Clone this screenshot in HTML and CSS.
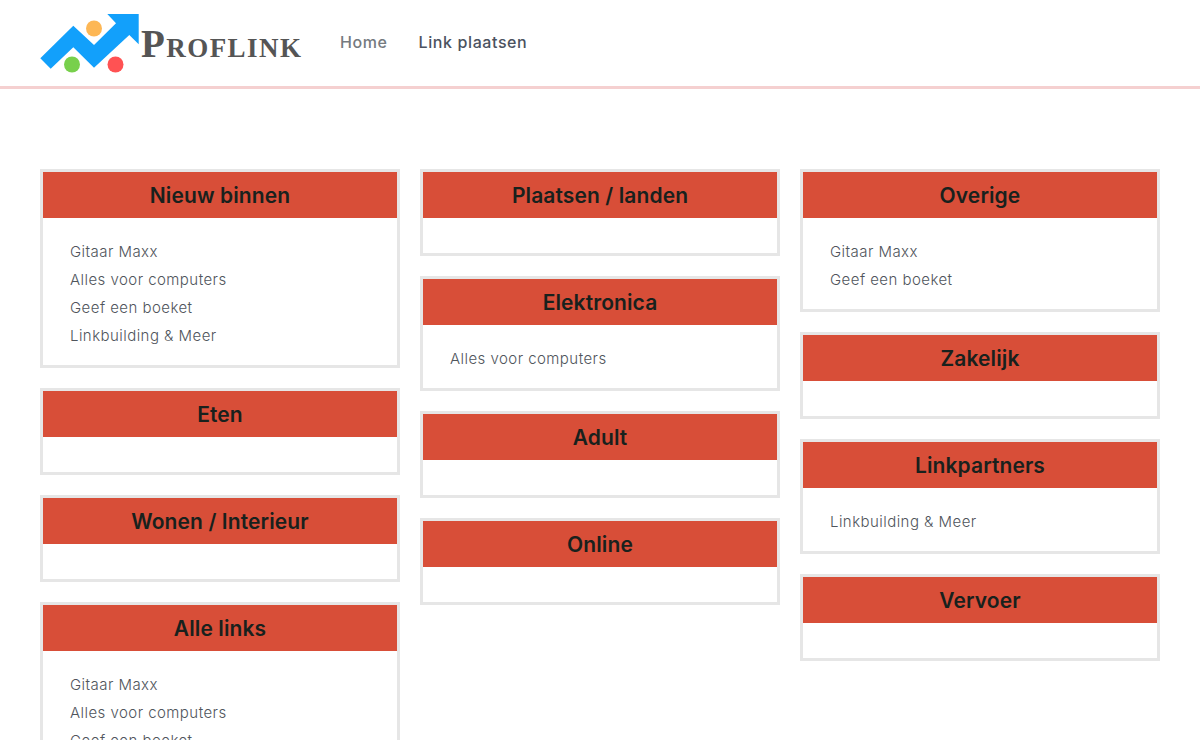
FILE: index.html
```html
<!DOCTYPE html>
<html lang="nl">
<head>
<meta charset="utf-8">
<title>Proflink</title>
<link rel="stylesheet" href="styles.css">
</head>
<body>
<header class="site-header">
  <a class="logo" href="#">
    <svg class="logo-mark" width="100" height="76" viewBox="0 0 100 76">
      <circle cx="54" cy="28.500" r="8" fill="#fdb755"/>
      <circle cx="32" cy="64.500" r="8" fill="#78d04c"/>
      <circle cx="75.500" cy="64.500" r="8" fill="#ff5253"/>
      <polygon fill="#12a0fb" points="0.300,58.300 33.300,25.700 54,45 76,23.300 67.300,14 98.700,14 98.700,44.300 89.300,35 54,67.700 33.300,47.300 10.700,68.700"/>
    </svg>
    <span class="logo-text">Proflink</span>
  </a>
  <nav class="nav">
    <a class="nav-link" href="#">Home</a>
    <a class="nav-link nav-link-active" href="#">Link plaatsen</a>
  </nav>
</header>
<main class="columns">
  <div class="column">
    <section class="card">
      <h2 class="card-title">Nieuw binnen</h2>
      <ul class="card-list">
        <li>Gitaar Maxx</li>
        <li>Alles voor computers</li>
        <li>Geef een boeket</li>
        <li>Linkbuilding &amp; Meer</li>
      </ul>
    </section>
    <section class="card">
      <h2 class="card-title">Eten</h2>
      <ul class="card-list"></ul>
    </section>
    <section class="card">
      <h2 class="card-title">Wonen / Interieur</h2>
      <ul class="card-list"></ul>
    </section>
    <section class="card">
      <h2 class="card-title">Alle links</h2>
      <ul class="card-list">
        <li>Gitaar Maxx</li>
        <li>Alles voor computers</li>
        <li>Geef een boeket</li>
        <li>Linkbuilding &amp; Meer</li>
      </ul>
    </section>
  </div>
  <div class="column">
    <section class="card">
      <h2 class="card-title">Plaatsen / landen</h2>
      <ul class="card-list"></ul>
    </section>
    <section class="card">
      <h2 class="card-title">Elektronica</h2>
      <ul class="card-list">
        <li>Alles voor computers</li>
      </ul>
    </section>
    <section class="card">
      <h2 class="card-title">Adult</h2>
      <ul class="card-list"></ul>
    </section>
    <section class="card">
      <h2 class="card-title">Online</h2>
      <ul class="card-list"></ul>
    </section>
  </div>
  <div class="column">
    <section class="card">
      <h2 class="card-title">Overige</h2>
      <ul class="card-list">
        <li>Gitaar Maxx</li>
        <li>Geef een boeket</li>
      </ul>
    </section>
    <section class="card">
      <h2 class="card-title">Zakelijk</h2>
      <ul class="card-list"></ul>
    </section>
    <section class="card">
      <h2 class="card-title">Linkpartners</h2>
      <ul class="card-list">
        <li>Linkbuilding &amp; Meer</li>
      </ul>
    </section>
    <section class="card">
      <h2 class="card-title">Vervoer</h2>
      <ul class="card-list"></ul>
    </section>
  </div>
</main>
</body>
</html>
```

FILE: styles.css
```css
html {
  overflow: hidden;
  height: 740px;
}
body {
  margin: 0;
  background: #fff;
  font-family: "Inter", "Noto Sans", sans-serif;
  color: #50555c;
}
a {
  text-decoration: none;
  color: inherit;
}
.site-header {
  display: flex;
  align-items: center;
  height: 86px;
  padding: 0 40px;
  border-bottom: 3px solid #f5d0d0;
}
.logo {
  display: flex;
  align-items: flex-start;
  width: 262px;
  height: 86px;
}
.logo-mark {
  flex: none;
  margin-right: 1px;
}
.logo-text {
  margin-top: 23px;
  font-family: "Liberation Serif", serif;
  font-weight: 700;
  font-variant: small-caps;
  font-size: 39px;
  line-height: 42px;
  letter-spacing: 1.45px;
  color: #555;
  white-space: nowrap;
}
.nav {
  display: flex;
  gap: 31px;
  margin-left: 38px;
  margin-bottom: 2px;
}
.nav-link {
  font-size: 16px;
  font-weight: 500;
  line-height: 24px;
  letter-spacing: 0.6px;
  color: #757a80;
}
.nav-link-active {
  color: #4b5260;
}
.columns {
  display: grid;
  grid-template-columns: repeat(3, 360px);
  gap: 20px;
  align-items: start;
  padding: 80px 40px 0;
}
.column {
  display: flex;
  flex-direction: column;
  gap: 20px;
}
.card {
  border: 3px solid #e6e6e6;
}
.card-title {
  margin: 0;
  height: 46px;
  background: #d84e38;
  font-size: 21px;
  font-weight: 600;
  line-height: 48px;
  letter-spacing: 0.1px;
  text-align: center;
  color: #18211d;
}
.card-list {
  list-style: none;
  margin: 0;
  padding: 20px 27px 15px;
  font-size: 15px;
  font-weight: 300;
  line-height: 28px;
  letter-spacing: 0.45px;
}
```
